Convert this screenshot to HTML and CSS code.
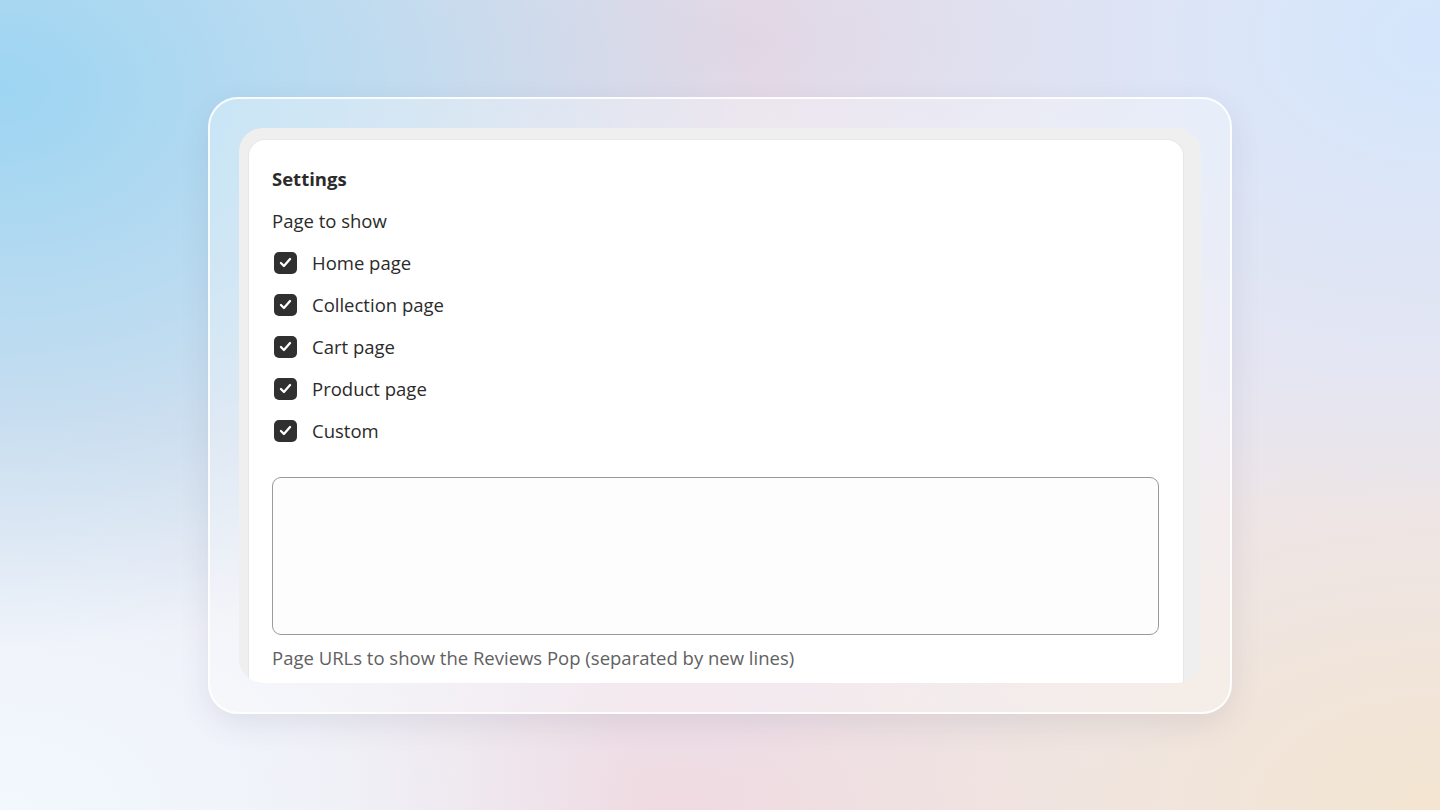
FILE: index.html
```html
<!DOCTYPE html>
<html lang="en">
<head>
    <meta charset="UTF-8">
    <meta name="viewport" content="width=device-width, initial-scale=1.0">
    <title>Settings - Page to show</title>
    <link rel="stylesheet" href="styles.css">
</head>
<body>
    <div class="frame">
        <div class="panel">
            <div class="card">
                <h2 class="card-title">Settings</h2>
                <p class="field-label">Page to show</p>

                <!-- Page checkboxes -->
                <ul class="checklist">
                    <li class="check-row"><span class="box"><svg viewBox="0 0 24 24"><path d="M6.8 12.6l3.4 3.4 7-8"/></svg></span>Home page</li>
                    <li class="check-row"><span class="box"><svg viewBox="0 0 24 24"><path d="M6.8 12.6l3.4 3.4 7-8"/></svg></span>Collection page</li>
                    <li class="check-row"><span class="box"><svg viewBox="0 0 24 24"><path d="M6.8 12.6l3.4 3.4 7-8"/></svg></span>Cart page</li>
                    <li class="check-row"><span class="box"><svg viewBox="0 0 24 24"><path d="M6.8 12.6l3.4 3.4 7-8"/></svg></span>Product page</li>
                    <li class="check-row"><span class="box"><svg viewBox="0 0 24 24"><path d="M6.8 12.6l3.4 3.4 7-8"/></svg></span>Custom</li>
                </ul>

                <textarea class="urls" aria-label="Page URLs"></textarea>
                <p class="help">Page URLs to show the Reviews Pop (separated by new lines)</p>
            </div>
        </div>
    </div>
</body>
</html>
```

FILE: styles.css
```css
/* General Styles */
body {
    margin: 0;
    height: 810px;
    overflow: hidden;
    display: flex;
    justify-content: center;
    align-items: center;
    font-family: "Open Sans", "Noto Sans", sans-serif;
    color: #2b2b2b;
    background-color: #ebe5ee;
    background-image:
        radial-gradient(ellipse 760px 560px at 0 90px, #9dd5f2 0%, rgba(157, 213, 242, 0.6) 45%, rgba(157, 213, 242, 0) 100%),
        radial-gradient(ellipse 700px 480px at 1440px 40px, #d4e6fc 0%, rgba(212, 230, 252, 0) 100%),
        radial-gradient(ellipse 720px 440px at 1440px 810px, #f4e5d1 0%, rgba(244, 229, 209, 0) 100%),
        radial-gradient(ellipse 640px 400px at 0 810px, #f2f8fe 0%, rgba(242, 248, 254, 0.7) 50%, rgba(242, 248, 254, 0) 100%),
        radial-gradient(ellipse 480px 240px at 760px 40px, #e2d6e4 0%, rgba(226, 214, 228, 0) 100%),
        radial-gradient(ellipse 480px 220px at 680px 810px, #f0dae1 0%, rgba(240, 218, 225, 0) 100%);
}

/* Glass frame */
.frame {
    width: 962px;
    padding: 29px;
    border: 2px solid rgba(255, 255, 255, 0.85);
    border-radius: 30px;
    background: rgba(255, 255, 255, 0.32);
    box-shadow: 0 10px 30px rgba(60, 60, 90, 0.10);
}

.panel {
    height: 555px;
    padding: 12px 18px 0 10px;
    border-radius: 24px;
    background: #efefef;
    overflow: hidden;
    box-sizing: border-box;
}

.card {
    height: 100%;
    padding: 27px 24px 0 23px;
    border-radius: 16px 16px 0 0;
    background: #fff;
    box-shadow: 0 0 0 1px rgba(0, 0, 0, 0.03);
    box-sizing: border-box;
}

.card-title {
    margin: 0;
    font-size: 18.5px;
    line-height: 24px;
    font-weight: 700;
}

.field-label {
    margin: 18px 0 0;
    font-size: 18.5px;
    line-height: 24px;
}

/* Checkboxes */
.checklist {
    margin: 9px 0 0;
    padding: 0;
    list-style: none;
}

.check-row {
    display: flex;
    align-items: center;
    height: 42px;
    font-size: 18.5px;
}

.box {
    width: 23px;
    height: 22px;
    margin: 0 15px 0 2px;
    border-radius: 5px;
    background: #303030;
    display: flex;
    justify-content: center;
    align-items: center;
}

.box svg {
    width: 21px;
    height: 21px;
    fill: none;
    stroke: #fff;
    stroke-width: 2.6;
    stroke-linecap: round;
    stroke-linejoin: round;
}

/* Textarea */
.urls {
    display: block;
    width: 100%;
    height: 158px;
    margin-top: 25px;
    border: 1.5px solid #9a9a9a;
    border-radius: 9px;
    background: #fdfdfd;
    resize: none;
    box-sizing: border-box;
}

.help {
    margin: 11px 0 0;
    font-size: 18.5px;
    line-height: 24px;
    color: #616161;
}
```
